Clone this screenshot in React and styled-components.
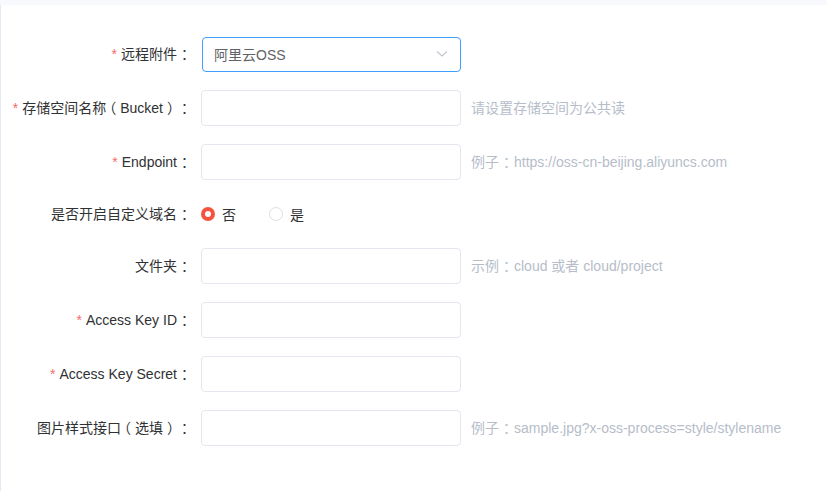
import React, { useState } from 'react';
import styled, { createGlobalStyle } from 'styled-components';

const GlobalStyle = createGlobalStyle`
  html, body {
    margin: 0;
    padding: 0;
    background: #fff;
    font-family: "Liberation Sans", "Noto Sans CJK SC", sans-serif;
  }
`;

const Page = styled.div`
  width: 827px;
  height: 491px;
  background: #f8f9fc;
  padding-top: 5px;
  box-sizing: border-box;
  overflow: hidden;
`;

const Card = styled.div`
  height: 100%;
  background: #fff;
  border-left: 1px solid #e3eaf6;
  padding-top: 32px;
  box-sizing: border-box;
`;

const Row = styled.div`
  display: flex;
  align-items: center;
  height: ${p => p.$h || 36}px;
  margin-bottom: 18px;
`;

const Label = styled.label`
  width: 191px;
  flex-shrink: 0;
  text-align: right;
  font-size: 14px;
  color: #303133;
  white-space: nowrap;
  box-sizing: border-box;
  padding-bottom: 3px;
`;

const Star = styled.span`
  color: #f56c6c;
  margin-right: 4px;
`;

/* full-width punctuation set half-width ("halt") and padded back out,
   so the mark sits centred in its em box as in the reference font */
const Punct = styled.span`
  display: inline-block;
  font-family: "Noto Sans CJK SC", sans-serif;
  font-feature-settings: "halt" 1;
  padding-left: ${p => p.$l}px;
  padding-right: ${p => p.$r}px;
`;

const Field = styled.div`
  margin-left: 9px;
  display: flex;
  align-items: center;
`;

const Input = styled.input`
  width: 260px;
  height: 36px;
  box-sizing: border-box;
  border: 1px solid #e4e7ef;
  border-radius: 4px;
  padding: 0 11px;
  font-size: 14px;
  font-family: inherit;
  color: #606266;
  outline: none;
`;

const Select = styled.div`
  width: 259px;
  height: 35px;
  margin-left: 1px;
  box-sizing: border-box;
  border: 1px solid #409eff;
  border-radius: 4px;
  padding: 0 12px 2px 11px;
  display: flex;
  align-items: center;
  justify-content: space-between;
  font-size: 14px;
  color: #606266;
`;

const Hint = styled.span`
  margin-left: 10px;
  padding-bottom: 2px;
  font-size: 14px;
  color: #b6bdc9;
  white-space: nowrap;
`;

const RadioGroup = styled.div`
  display: flex;
  align-items: center;
  gap: 33px;
  font-size: 14px;
  color: #303133;
`;

const RadioItem = styled.span`
  display: flex;
  align-items: center;
  gap: 7px;
  cursor: pointer;
`;

const Dot = styled.span`
  width: 14px;
  height: 14px;
  box-sizing: border-box;
  border-radius: 50%;
  border: ${p => (p.$on ? '4px solid #f5533d' : '1px solid #dcdfe6')};
  background: #fff;
`;

const Chevron = () => (
  <svg width="12" height="8" viewBox="0 0 12 8">
    <path d="M1 1.5 L6 6 L11 1.5" fill="none" stroke="#c0c4cc" strokeWidth="1.1" />
  </svg>
);

const Colon = () => <Punct $l={4} $r={4}>：</Punct>;
const Open = () => <Punct $l={3} $r={4}>（</Punct>;
const Close = () => <Punct $l={4} $r={3}>）</Punct>;

const fields = [
  {
    label: <>存储空间名称<Open />Bucket<Close /></>,
    key: 'bucket',
    req: true,
    hint: '请设置存储空间为公共读',
  },
  { label: 'Endpoint', key: 'endpoint', req: true, hint: <>例子<Colon />https://oss-cn-beijing.aliyuncs.com</> },
  { radio: true, key: 'domain', label: '是否开启自定义域名' },
  { label: '文件夹', key: 'folder', hint: <>示例<Colon />cloud 或者 cloud/project</> },
  { label: 'Access Key ID', key: 'akid', req: true },
  { label: 'Access Key Secret', key: 'aksecret', req: true },
  {
    label: <>图片样式接口<Open />选填<Close /></>,
    key: 'style',
    hint: <>例子<Colon />sample.jpg?x-oss-process=style/stylename</>,
  },
];

export default function App() {
  const [custom, setCustom] = useState(false);

  return (
    <>
      <GlobalStyle />
      <Page>
        <Card>
          <Row $h={35}>
            <Label><Star>*</Star>远程附件<Colon /></Label>
            <Field>
              <Select>
                阿里云OSS
                <Chevron />
              </Select>
            </Field>
          </Row>
          {fields.map(f =>
            f.radio ? (
              <Row key={f.key} $h={32}>
                <Label>{f.label}<Colon /></Label>
                <Field>
                  <RadioGroup>
                    <RadioItem onClick={() => setCustom(false)}>
                      <Dot $on={!custom} />否
                    </RadioItem>
                    <RadioItem onClick={() => setCustom(true)}>
                      <Dot $on={custom} />是
                    </RadioItem>
                  </RadioGroup>
                </Field>
              </Row>
            ) : (
              <Row key={f.key}>
                <Label>
                  {f.req && <Star>*</Star>}
                  {f.label}
                  <Colon />
                </Label>
                <Field>
                  <Input />
                  {f.hint && <Hint>{f.hint}</Hint>}
                </Field>
              </Row>
            )
          )}
        </Card>
      </Page>
    </>
  );
}
